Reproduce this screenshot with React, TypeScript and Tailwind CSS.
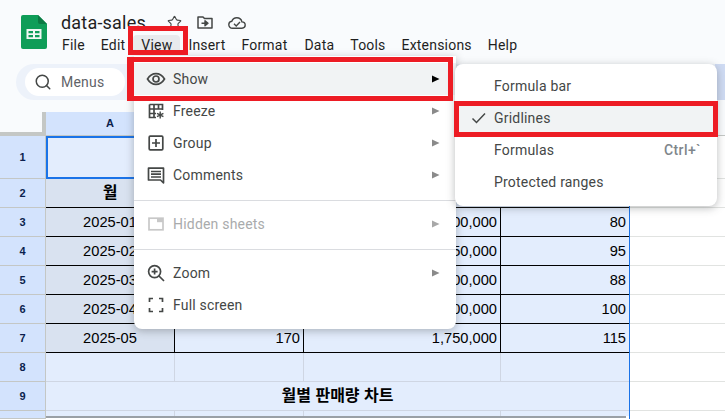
import React from "react";
import { Search, Star } from "lucide-react";

const ui = "font-['Roboto',sans-serif]";
const cellFont = "font-['Liberation_Sans','Noto_Sans_CJK_KR',sans-serif] text-[14.67px] text-black";

function Arrow({ dark, light }: { dark?: boolean; light?: boolean }) {
  return (
    <svg width="8" height="8" viewBox="0 0 8 8" className="shrink-0">
      <path d="M0 0.5 L7.5 4 L0 7.5 Z" fill={dark ? "#000000" : light ? "#a8a8a8" : "#8a8a8a"} />
    </svg>
  );
}

const stroke = { fill: "none", stroke: "#444746", strokeWidth: 1.7 } as const;

const EyeIcon = () => (
  <svg width="20" height="20" viewBox="0 0 20 20">
    <path d="M1.5 10 C4 5.8 7 4.6 10 4.6 S16 5.8 18.5 10 C16 14.2 13 15.4 10 15.4 S4 14.2 1.5 10 Z" {...stroke} />
    <circle cx="10" cy="10" r="3" {...stroke} />
  </svg>
);
const FreezeIcon = () => (
  <svg width="20" height="20" viewBox="0 0 20 20">
    <path d="M3.5 3.5 H16.5 V9 M3.5 3.5 V16.5 H10 M3.5 8 H16.5 M3.5 12.5 H10 M8 3.5 V16.5 M12.5 3.5 V8" {...stroke} />
    <path d="M14.2 10.5 V17.5 M11 12.3 L17.4 15.7 M17.4 12.3 L11 15.7" {...stroke} strokeWidth="1.4" />
  </svg>
);
const GroupIcon = () => (
  <svg width="20" height="20" viewBox="0 0 20 20">
    <rect x="3.2" y="3.2" width="13.6" height="13.6" rx="1" {...stroke} />
    <path d="M10 6 V14 M6 10 H14" {...stroke} />
  </svg>
);
const CommentIcon = () => (
  <svg width="20" height="20" viewBox="0 0 20 20">
    <path d="M2.5 3.2 H17.5 V17.8 L14.5 15 H2.5 Z" {...stroke} strokeLinejoin="round" />
    <path d="M5 6.5 H15 M5 9.2 H15 M5 12 H15" {...stroke} />
  </svg>
);
const HiddenIcon = () => (
  <svg width="20" height="20" viewBox="0 0 20 20">
    <rect x="3" y="4.2" width="14" height="11.6" fill="none" stroke="#c8c8c8" strokeWidth="1.7" />
    <rect x="11" y="4.2" width="6" height="4" fill="#c8c8c8" />
  </svg>
);
const ZoomIcon = () => (
  <svg width="20" height="20" viewBox="0 0 20 20">
    <circle cx="8.6" cy="8.6" r="6" {...stroke} />
    <path d="M13 13 L18 18 M8.6 5.6 V11.6 M5.6 8.6 H11.6" {...stroke} />
  </svg>
);
const FullIcon = () => (
  <svg width="20" height="20" viewBox="0 0 20 20">
    <path d="M3.5 7 V3.5 H7 M13 3.5 H16.5 V7 M16.5 13 V16.5 H13 M7 16.5 H3.5 V13" {...stroke} />
  </svg>
);
const MoveIcon = () => (
  <svg width="16" height="13" viewBox="0 0 16 13" className="ml-[15px] shrink-0">
    <path d="M1 1 H6 L7.5 2.6 H15 V12 H1 Z" fill="none" stroke="#444746" strokeWidth="1.5" strokeLinejoin="round" />
    <path d="M4.5 7.3 H9.5 M8 4.8 L11 7.3 L8 9.8 Z" fill="#444746" stroke="#444746" strokeWidth="1.4" strokeLinejoin="round" />
  </svg>
);
const CloudIcon = () => (
  <svg width="18" height="12" viewBox="0 0 18 12" className="ml-[15px] shrink-0">
    <path d="M4.5 11.2 C2.3 11.2 0.8 9.6 0.8 7.7 C0.8 5.9 2.1 4.5 3.8 4.3 C4.6 2.1 6.5 0.8 8.8 0.8 C11.4 0.8 13.4 2.5 13.9 4.9 C15.8 5 17.2 6.3 17.2 8.1 C17.2 9.9 15.8 11.2 14 11.2 Z" fill="none" stroke="#444746" strokeWidth="1.4" />
    <path d="M6 6.8 L8.2 8.9 L12 4.9" fill="none" stroke="#444746" strokeWidth="1.4" />
  </svg>
);

function MenuRow({ icon, label, active, disabled, arrow = true }: { icon: React.ReactNode; label: string; active?: boolean; disabled?: boolean; arrow?: boolean }) {
  return (
    <div className={`flex h-8 items-center pl-3 pr-4 ${active ? "bg-[#f1f3f4]" : ""}`}>
      <span className="flex w-[27px] shrink-0 items-center">{icon}</span>
      <span className={`flex-1 text-[14px] tracking-[0.2px] ${disabled ? "text-[#a9abac]" : "text-[#444746]"}`}>{label}</span>
      {arrow && <Arrow dark={active} light={disabled} />}
    </div>
  );
}

function SubRow({ label, active, check, hint }: { label: string; active?: boolean; check?: boolean; hint?: string }) {
  return (
    <div className={`flex h-8 items-center pr-4 ${active ? "bg-[#f1f3f4]" : ""}`}>
      <span className="flex w-[39px] shrink-0 justify-end pr-[7px]">
        {check && (
          <svg width="16" height="14" viewBox="0 0 16 14">
            <path d="M1.5 7.5 L5.5 11.5 L14 2.5" fill="none" stroke="#444746" strokeWidth="1.5" />
          </svg>
        )}
      </span>
      <span className="flex-1 text-[14px] tracking-[0.2px] text-[#444746]">{label}</span>
      {hint && <span className="text-[14px] font-medium tracking-[0.4px] text-[#80868b]">{hint}</span>}
    </div>
  );
}

const heads = ["1", "2", "3", "4", "5", "6", "7", "8", "9", ""];
const heights = ["h-[43px]", "h-[29px]", "h-[29px]", "h-[29px]", "h-[29px]", "h-[29px]", "h-[29px]", "h-[29px]", "h-[29px]", "h-[8px]"];
const dataRows = [
  ["2025-01", "", "1,500,000", "80"],
  ["2025-02", "", "1,350,000", "95"],
  ["2025-03", "", "1,400,000", "88"],
  ["2025-04", "", "1,600,000", "100"],
  ["2025-05", "170", "1,750,000", "115"],
];

export default function App() {
  return (
    <div className={`relative h-[419px] w-[725px] overflow-hidden bg-white ${ui}`}>
      {/* Title bar */}
      <header className="flex h-[64px] bg-[#f9fbfd] pl-[21px]">
        <svg width="26" height="34" viewBox="0 0 26 34" className="mt-[15px] shrink-0">
          <path d="M2 0 H17 L26 9 V32 a2 2 0 0 1 -2 2 H2 a2 2 0 0 1 -2 -2 V2 a2 2 0 0 1 2 -2 Z" fill="#0f9d58" />
          <path d="M17 0 L26 9 H19 a2 2 0 0 1 -2 -2 Z" fill="#0b7a43" />
          <path d="M5.5 14 H20.5 V24 H5.5 Z M7.5 16 V18.2 H12 V16 Z M14 16 V18.2 H18.5 V16 Z M7.5 20 V22.2 H12 V20 Z M14 20 V22.2 H18.5 V20 Z" fill="#f1f8f4" fillRule="evenodd" />
        </svg>
        <div className="ml-[14px] flex flex-col">
          <div className="mt-[10px] flex h-[25px] items-center">
            <span className="text-[18px] leading-[25px] tracking-[0.2px] text-[#1f1f1f]">data-sales</span>
            <Star size={15} strokeWidth={1.8} className="ml-[21px] text-[#444746]" />
            <MoveIcon />
            <CloudIcon />
          </div>
          <nav className="flex h-[20px] items-center pl-[1px] text-[14px] tracking-[0.2px] text-[#1f1f1f]">
            <span>File</span>
            <span className="ml-[16px]">Edit</span>
            <span className="ml-[8px] flex h-full items-center rounded-t bg-[#e8eaed] px-[8px]">View</span>
            <span className="ml-[8px]">Insert</span>
            <span className="ml-[16px]">Format</span>
            <span className="ml-[17px]">Data</span>
            <span className="ml-[16px]">Tools</span>
            <span className="ml-[16px]">Extensions</span>
            <span className="ml-[16px]">Help</span>
          </nav>
        </div>
      </header>

      {/* Toolbar */}
      <div className="h-[48px] bg-[#f9fbfd] pl-[16px] pb-[12px]">
        <div className="flex h-[36px] items-center rounded-l-full bg-[#edf2fa] pl-[9px]">
          <div className="flex h-[28px] w-[100px] items-center rounded-full bg-white pl-[9px]">
            <Search size={18} strokeWidth={2} className="text-[#444746]" />
            <span className="ml-[9px] text-[14px] tracking-[0.2px] text-[#5f6368]">Menus</span>
          </div>
          <div className="ml-auto h-full w-[10px] bg-[#cfdbf3]" />
        </div>
      </div>

      {/* Column headers */}
      <div className="flex h-[24px]">
        <div className="w-[46px] shrink-0 border-r-[4px] border-b-[4px] border-[#c4c7c5] bg-[#f9fbfd]" />
        <div className="flex w-[583px] border-b border-[#c4c7c5] bg-[#d3e3fd]">
          <div className="flex w-[128px] items-center justify-center font-['Liberation_Sans',sans-serif] text-[11px] font-bold text-[#0b1f4d]">A</div>
        </div>
        <div className="flex-1 border-b border-[#c4c7c5] bg-[#f9fbfd]" />
      </div>

      {/* Sheet */}
      <div className="flex">
        <div className="w-[46px] shrink-0">
          {heads.map((h, i) => (
            <div key={i} className={`flex items-center justify-center border-r border-b border-[#c4c7c5] bg-[#d3e3fd] font-['Liberation_Sans',sans-serif] text-[11px] font-bold text-[#0b1f4d] ${heights[i]}`}>
              {h}
            </div>
          ))}
        </div>
        <div className="w-[584px] shrink-0 border-r border-[#1a73e8]">
          <div className="h-[43px] border-2 border-r-0 border-[#1a73e8] bg-[#e3edfd]" />
          <div className="flex h-[29px] border-b border-black bg-[#e3edfd]">
            <div className="flex w-[128px] items-center justify-center bg-[#d9e2f0] font-['Liberation_Sans','Noto_Sans_CJK_KR',sans-serif] text-[16px] font-bold text-black">월</div>
          </div>
          {dataRows.map((r) => (
            <div key={r[0]} className={`flex h-[29px] border-b border-black bg-[#e3edfd] ${cellFont}`}>
              <div className="flex w-[128px] items-center justify-center bg-[#d9e2f0]">{r[0]}</div>
              <div className="flex w-[129px] items-center justify-end border-l border-black pr-[3px]">{r[1]}</div>
              <div className="flex w-[197px] items-center justify-end border-l border-black pr-[3px]">{r[2]}</div>
              <div className="flex flex-1 items-center justify-end border-l border-black pr-[3px]">{r[3]}</div>
            </div>
          ))}
          <div className="flex h-[29px] border-b border-[#cfd6e3] bg-[#e3edfd]">
            <div className="w-[129px] border-r border-[#cfd6e3]" />
            <div className="w-[129px] border-r border-[#cfd6e3]" />
            <div className="w-[197px] border-r border-[#cfd6e3]" />
          </div>
          <div className="flex h-[29px] items-center justify-center border-b border-[#cfd6e3] bg-[#e3edfd] font-['Liberation_Sans','Noto_Sans_CJK_KR',sans-serif] text-[16px] font-bold text-black">월별 판매량 차트</div>
          <div className="flex h-[5px] bg-[#e3edfd]">
            <div className="w-[129px] border-r border-[#cfd6e3]" />
            <div className="w-[129px] border-r border-[#cfd6e3]" />
            <div className="w-[197px] border-r border-[#cfd6e3]" />
          </div>
          <div className="h-[2px] w-[580px] bg-[#9aa0a6]" />
        </div>
        <div className="flex-1">
          {heights.map((h, i) => (
            <div key={i} className={`${i < 9 ? "border-b border-[#e1e3e1]" : ""} ${h}`} />
          ))}
        </div>
      </div>

      {/* View menu */}
      <div className="absolute left-[134px] top-[56px] w-[322px] rounded-b-lg bg-white pt-[7px] pb-[8px] shadow-[0_2px_8px_rgba(60,64,67,0.35)]">
        <MenuRow icon={<EyeIcon />} label="Show" active />
        <MenuRow icon={<FreezeIcon />} label="Freeze" />
        <MenuRow icon={<GroupIcon />} label="Group" />
        <MenuRow icon={<CommentIcon />} label="Comments" />
        <div className="mt-[9px] mb-[7px] h-px bg-[#dadce0]" />
        <MenuRow icon={<HiddenIcon />} label="Hidden sheets" disabled />
        <div className="mt-[9px] mb-[7px] h-px bg-[#dadce0]" />
        <MenuRow icon={<ZoomIcon />} label="Zoom" />
        <MenuRow icon={<FullIcon />} label="Full screen" arrow={false} />
      </div>

      {/* Show submenu */}
      <div className="absolute left-[455px] top-[64px] w-[262px] rounded-lg bg-white pt-[6px] pb-[8px] shadow-[0_2px_8px_rgba(60,64,67,0.35)]">
        <SubRow label="Formula bar" />
        <SubRow label="Gridlines" active check />
        <SubRow label="Formulas" hint="Ctrl+`" />
        <SubRow label="Protected ranges" />
      </div>

      {/* Red annotation boxes */}
      <div className="absolute left-[128px] top-[26px] h-[29px] w-[60px] border-[5px] border-[#ed1c24]" />
      <div className="absolute left-[127px] top-[57px] h-[44px] w-[326px] border-[5px] border-l-[7px] border-[#ed1c24]" />
      <div className="absolute left-[454px] top-[101px] h-[36px] w-[264px] border-[5px] border-[#ed1c24]" />
    </div>
  );
}
